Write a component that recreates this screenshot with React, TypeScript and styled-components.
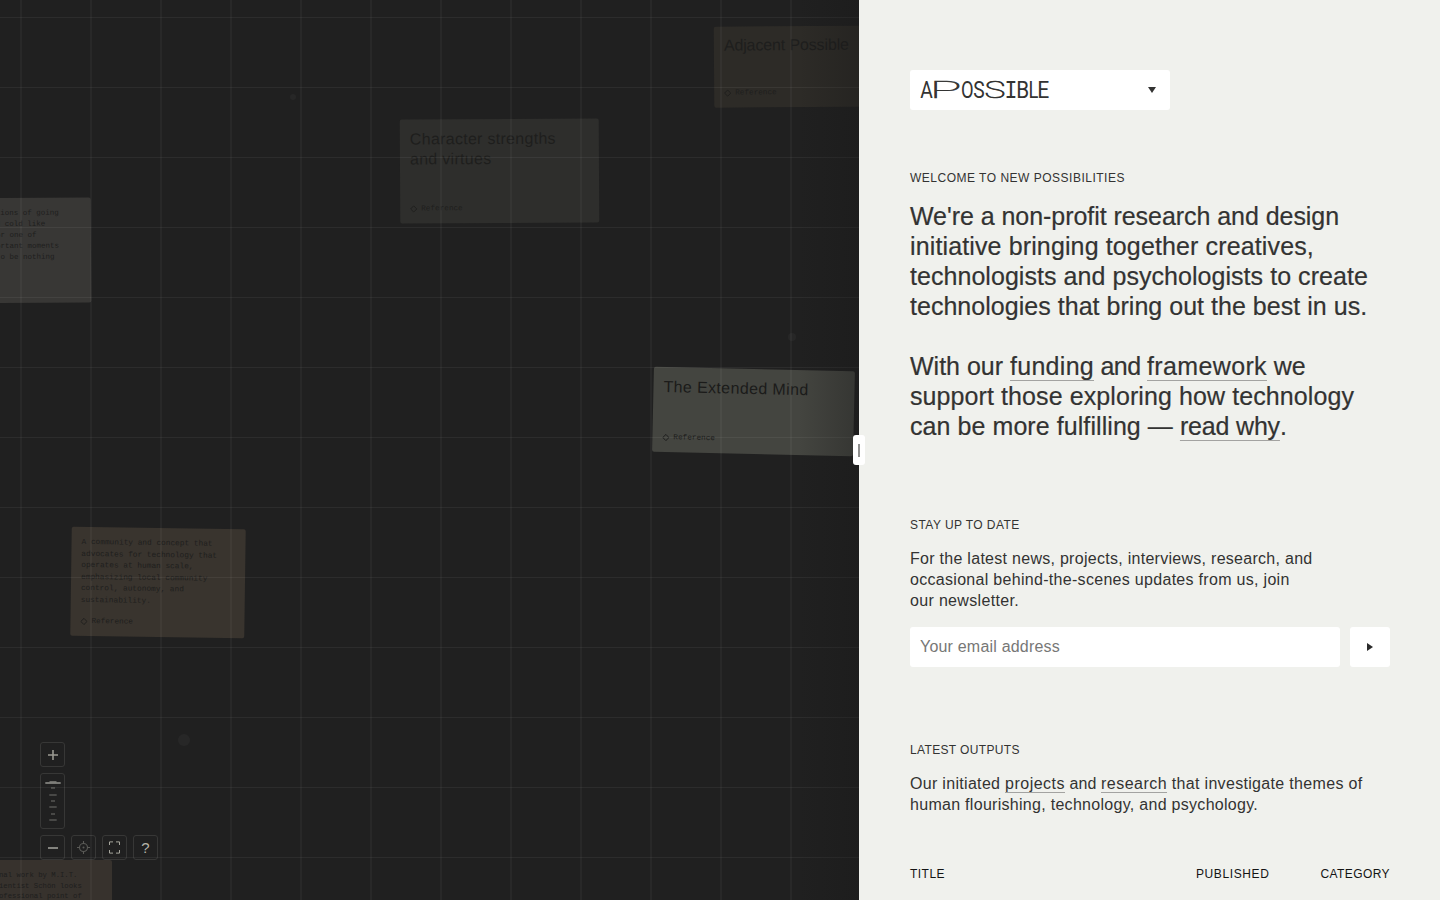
import React from 'react';
import styled, { createGlobalStyle } from 'styled-components';

const GlobalStyle = createGlobalStyle`
  * { box-sizing: border-box; }
  body { margin: 0; background: #f0f1ed; font-family: "Liberation Sans", Arial, sans-serif; }
`;

const Page = styled.div`
  display: flex;
  width: 100vw;
  height: 900px;
  overflow: hidden;
`;

/* ---------- canvas ---------- */

const Canvas = styled.main`
  position: relative;
  flex: 1;
  overflow: hidden;
  background: #202020;
`;

const Grid = styled.div`
  position: absolute;
  inset: 0;
  pointer-events: none;
  background-image:
    linear-gradient(90deg, rgba(255, 255, 255, 0.036) 2px, transparent 2px),
    linear-gradient(180deg, rgba(255, 255, 255, 0.056) 1px, transparent 1px);
  background-size: 70px 70px;
  background-position: 20px 17px;
`;

const EdgeShade = styled.div`
  position: absolute;
  inset: 0 0 0 auto;
  width: 60px;
  pointer-events: none;
  background: linear-gradient(90deg, rgba(24, 24, 24, 0), rgba(24, 24, 24, 0.35));
`;

const Card = styled.article<{ $x: number; $y: number; $w: number; $h: number; $bg: string; $tilt?: number; $ink?: string }>`
  position: absolute;
  left: ${(p) => p.$x}px;
  top: ${(p) => p.$y}px;
  width: ${(p) => p.$w}px;
  height: ${(p) => p.$h}px;
  padding: 10px;
  display: flex;
  flex-direction: column;
  justify-content: space-between;
  border-radius: 2px;
  background: ${(p) => p.$bg};
  color: ${(p) => p.$ink ?? '#1e1e1d'};
  transform: rotate(${(p) => p.$tilt ?? 0}deg);
`;

const CardTitle = styled.h3<{ $track: number; $leading?: number }>`
  margin: 0;
  font-size: 16px;
  font-weight: 400;
  line-height: ${(p) => p.$leading ?? 20}px;
  letter-spacing: ${(p) => p.$track}px;
  white-space: pre;
`;

const CardText = styled.p<{ $size: number; $leading: number }>`
  margin: 0;
  font-family: "Liberation Mono", monospace;
  font-size: ${(p) => p.$size}px;
  line-height: ${(p) => p.$leading}px;
  white-space: pre;
`;

const Tag = styled.div`
  display: flex;
  align-items: center;
  gap: 4px;
  height: 9px;
  font-family: "Liberation Mono", monospace;
  font-size: 7.7px;
  line-height: 9px;
`;

const Reference = () => (
  <Tag>
    <svg width="7" height="7" viewBox="0 0 7 7" fill="none" stroke="currentColor" strokeWidth="0.9">
      <path d="M3.5 0.4 6.6 3.5 3.5 6.6 0.4 3.5Z" />
    </svg>
    Reference
  </Tag>
);

const Speck = styled.i<{ $x: number; $y: number; $r: number }>`
  position: absolute;
  left: ${(p) => p.$x - p.$r}px;
  top: ${(p) => p.$y - p.$r}px;
  width: ${(p) => p.$r * 2}px;
  height: ${(p) => p.$r * 2}px;
  border-radius: 50%;
  background: #272727;
`;

const Controls = styled.div`
  position: absolute;
  left: 40px;
  bottom: 40px;
  display: flex;
  flex-direction: column;
  gap: 6px;
`;

const ControlRow = styled.div`
  display: flex;
  gap: 6px;
`;

const Control = styled.button<{ $tall?: boolean; $dim?: boolean }>`
  width: 25px;
  height: ${(p) => (p.$tall ? 56 : 25)}px;
  padding: 0;
  display: flex;
  align-items: center;
  justify-content: center;
  border: 1px solid #373736;
  border-radius: 3px;
  background: #202020;
  color: ${(p) => (p.$dim ? '#5b5b57' : '#b4b3a9')};
  font: 15px/24px "Liberation Sans", Arial, sans-serif;
`;

/* ---------- side panel ---------- */

const Panel = styled.aside`
  position: relative;
  width: 581px;
  flex: none;
  padding: 70px 50px 0 51px;
  display: flex;
  flex-direction: column;
  background: #f0f1ed;
  color: #333332;
`;

const Handle = styled.div`
  position: absolute;
  left: -6px;
  top: 435px;
  width: 12px;
  height: 30px;
  display: flex;
  align-items: center;
  justify-content: center;
  border-radius: 3px;
  background: #fff;

  &::after {
    content: "";
    width: 2px;
    height: 13px;
    background: #8f8f8e;
  }
`;

const SiteSelect = styled.button`
  width: 260px;
  height: 40px;
  padding: 0 14px 0 10px;
  display: flex;
  align-items: center;
  justify-content: space-between;
  border: 0;
  border-radius: 3px;
  background: #fff;
  color: #333332;
`;

const Section = styled.section<{ $top: number }>`
  margin-top: ${(p) => p.$top}px;
`;

const Eyebrow = styled.h2`
  margin: 0;
  font-size: 12px;
  font-weight: 400;
  line-height: 20px;
`;

const Lead = styled.p`
  margin: 13px 0 30px;
  font-size: 25px;
  line-height: 30px;
  -webkit-text-stroke: 0.2px currentColor;
`;

const Body = styled.p`
  margin: 13px 0 0;
  font-size: 16px;
  line-height: 21px;
`;

const Line = styled.span`
  display: block;
  white-space: pre;
`;

const Run = styled.span<{ $t: number }>`
  letter-spacing: ${(p) => p.$t}px;
`;

const Link = styled.a<{ $t: number; $drop: number }>`
  letter-spacing: ${(p) => p.$t}px;
  text-decoration: underline;
  text-decoration-color: #a3a3a1;
  text-decoration-thickness: 1px;
  text-decoration-skip-ink: none;
  text-underline-offset: ${(p) => p.$drop}px;
`;

const Form = styled.form`
  margin-top: 16px;
  display: flex;
  gap: 10px;
`;

const EmailInput = styled.input`
  flex: 1;
  height: 40px;
  padding: 0 10px;
  border: 0;
  border-radius: 3px;
  background: #fff;
  font: 16px "Liberation Sans", Arial, sans-serif;
  letter-spacing: 0.2px;

  &::placeholder { color: #777776; }
`;

const Submit = styled.button`
  width: 40px;
  height: 40px;
  padding: 0;
  display: flex;
  align-items: center;
  justify-content: center;
  border: 0;
  border-radius: 3px;
  background: #fff;
  color: #2a2a2a;
`;

const TableHead = styled.div`
  margin-top: 49px;
  display: grid;
  grid-template-columns: 286px 1fr auto;
  font-size: 12px;
  line-height: 20px;
  color: #141414;
`;

const LogoGlyph = styled.text<{ $wide?: boolean; $mono?: boolean }>`
  font-family: ${(p) => (p.$mono ? '"Liberation Mono", monospace' : 'Roboto, sans-serif')};
  font-size: ${(p) => (p.$mono ? 25 : 23.5)}px;
  font-weight: ${(p) => (p.$wide ? 100 : 400)};
  stroke: ${(p) => (p.$wide ? 'currentColor' : 'none')};
  stroke-width: 0.9px;
  vector-effect: non-scaling-stroke;
`;

const LETTERS: { ch: string; x: number; sx: number; wide?: boolean; mono?: boolean }[] = [
  { ch: 'A', x: 0.3, sx: 0.82 },
  { ch: 'P', x: 9.8, sx: 2.25, wide: true },
  { ch: 'O', x: 40.9, sx: 0.78 },
  { ch: 'S', x: 53.2, sx: 0.82 },
  { ch: 'S', x: 64.4, sx: 1.5, wide: true },
  { ch: 'I', x: 84.5, sx: 0.86, mono: true },
  { ch: 'B', x: 96.2, sx: 0.88 },
  { ch: 'L', x: 108.4, sx: 0.78 },
  { ch: 'E', x: 117.2, sx: 0.9 },
];

const Logo = () => (
  <svg width="132" height="24" viewBox="0 0 132 24" fill="currentColor" role="img">
    {LETTERS.map((l, i) => (
      <LogoGlyph key={i} $wide={l.wide} $mono={l.mono} transform={`translate(${l.x} 20.2) scale(${l.sx} 1)`}>
        {l.ch}
      </LogoGlyph>
    ))}
  </svg>
);

export default function App() {
  return (
    <>
      <GlobalStyle />
      <Page>
        <Canvas>
          <Speck $x={184} $y={740} $r={6} />
          <Speck $x={292.5} $y={97} $r={3} />
          <Speck $x={792} $y={337} $r={4} />

          <Card $x={-59} $y={197.5} $w={150} $h={104.5} $bg="#383735" $tilt={-0.4}>
            <CardText $size={7.5} $leading={11}>
              {'When sensations of going\nto warm and cold like\nyour day, or one of\nof the important moments\nthat seem to be nothing'}
            </CardText>
          </Card>
          <Card $x={399.7} $y={119} $w={199} $h={103.5} $bg="#2e2e2c" $tilt={-0.3}>
            <CardTitle $track={0.29}>{'Character strengths\nand virtues'}</CardTitle>
            <Reference />
          </Card>
          <Card $x={713.6} $y={26} $w={200} $h={80.5} $bg="#2d2b27" $tilt={-0.4}>
            <CardTitle $track={-0.13} $leading={17}>Adjacent Possible</CardTitle>
            <Reference />
          </Card>
          <Card $x={652.7} $y={369} $w={200.5} $h={84.5} $bg="#444540" $tilt={1.3} $ink="#1b1b1a">
            <CardTitle $track={0.37} $leading={20}>The Extended Mind</CardTitle>
            <Reference />
          </Card>
          <Card $x={71} $y={527.5} $w={174} $h={108.5} $bg="#39342e" $tilt={0.8}>
            <CardText $size={7.8} $leading={11.5}>
              {'A community and concept that\nadvocates for technology that\noperates at human scale,\nemphasizing local community\ncontrol, autonomy, and\nsustainability.'}
            </CardText>
            <Reference />
          </Card>

          <Controls>
            <Control aria-label="Zoom in">
              <svg width="23" height="23" viewBox="0 0 23 23" stroke="#9a9991" strokeWidth="1.6">
                <path d="M12 7v10M7 12h10" />
              </svg>
            </Control>
            <Control $tall aria-label="Zoom level">
              <svg width="23" height="54" viewBox="0 0 23 54" stroke="#555553" strokeWidth="1.6">
                <path d="M8.5 7.8h7" stroke="#8f8f89" strokeWidth="1" />
                <path d="M4.3 9h15.4" stroke="#8f8f89" />
                <path d="M10 14h4M8.3 21h7.4M10 27h4M8.3 33h7.4M10 40h4M8.3 46h7.4" />
              </svg>
            </Control>
            <ControlRow>
              <Control aria-label="Zoom out">
                <svg width="23" height="23" viewBox="0 0 23 23" stroke="#8f8f89" strokeWidth="1.8">
                  <path d="M7 12h10" />
                </svg>
              </Control>
              <Control $dim aria-label="Center">
                <svg width="13" height="13" viewBox="0 0 13 13" fill="none" stroke="currentColor" strokeWidth="1.1">
                  <circle cx="6.5" cy="6.5" r="4" />
                  <path d="M6.5 0v2.5M6.5 10.5V13M0 6.5h2.5M10.5 6.5H13" />
                  <circle cx="6.5" cy="6.5" r="1" fill="currentColor" stroke="none" />
                </svg>
              </Control>
              <Control aria-label="Fullscreen">
                <svg width="11" height="13" viewBox="0 0 11 13" fill="none" stroke="currentColor" strokeWidth="0.9">
                  <path d="M0.5 4V0.9H4M7 0.9h3.5V4M10.5 9v3.1H7M4 12.1H0.5V9" />
                </svg>
              </Control>
              <Control aria-label="Help">?</Control>
            </ControlRow>
          </Controls>

          <Card $x={-59} $y={860} $w={171} $h={104} $bg="#37322d">
            <CardText $size={7.28} $leading={10.5}>
              {'A foundational work by M.I.T.\nResearch scientist Schön looks\nfrom the professional point of'}
            </CardText>
          </Card>
          <Grid />
          <EdgeShade />
        </Canvas>

        <Panel>
          <Handle />
          <SiteSelect aria-label="Apossible">
            <Logo />
            <svg width="8" height="6" viewBox="0 0 8 6" fill="currentColor"><path d="M0 0h8L4 6Z" /></svg>
          </SiteSelect>

          <Section $top={58}>
            <Eyebrow><Run $t={0.5}>WELCOME TO NEW POSSIBILITIES</Run></Eyebrow>
            <Lead>
              <Line><Run $t={-0.05}>We're a non-profit research and design</Run></Line>
              <Line><Run $t={0.13}>initiative bringing together creatives,</Run></Line>
              <Line><Run $t={0.05}>technologists and psychologists to create</Run></Line>
              <Line><Run $t={0.03}>technologies that bring out the best in us.</Run></Line>
            </Lead>
            <Lead>
              <Line>
                <Run $t={0}>With our </Run><Link $t={0.28} $drop={5}>funding</Link>
                <Run $t={-0.52}> and </Run><Link $t={0.36} $drop={5}>framework</Link><Run $t={-0.1}> we</Run>
              </Line>
              <Line><Run $t={0.09}>support those exploring how technology</Run></Line>
              <Line><Run $t={0.07}>can be more fulfilling — </Run><Link $t={-0.18} $drop={5}>read why</Link>.</Line>
            </Lead>
          </Section>

          <Section $top={44}>
            <Eyebrow><Run $t={0.44}>STAY UP TO DATE</Run></Eyebrow>
            <Body>
              <Line><Run $t={0.28}>For the latest news, projects, interviews, research, and</Run></Line>
              <Line><Run $t={0.3}>occasional behind-the-scenes updates from us, join</Run></Line>
              <Line><Run $t={0.33}>our newsletter.</Run></Line>
            </Body>
            <Form>
              <EmailInput type="email" placeholder="Your email address" />
              <Submit type="button" aria-label="Subscribe">
                <svg width="6" height="8" viewBox="0 0 6 8" fill="currentColor"><path d="M0 0v8L6 4Z" /></svg>
              </Submit>
            </Form>
          </Section>

          <Section $top={73}>
            <Eyebrow><Run $t={0.35}>LATEST OUTPUTS</Run></Eyebrow>
            <Body>
              <Line>
                <Run $t={0.31}>Our initiated </Run><Link $t={0.49} $drop={3}>projects</Link>
                <Run $t={0.08}> and </Run><Link $t={0.47} $drop={3}>research</Link>
                <Run $t={0.32}> that investigate themes of</Run>
              </Line>
              <Line><Run $t={0.29}>human flourishing, technology, and psychology.</Run></Line>
            </Body>
            <TableHead>
              <Run $t={0.47}>TITLE</Run>
              <Run $t={0.6}>PUBLISHED</Run>
              <Run $t={0.42}>CATEGORY</Run>
            </TableHead>
          </Section>
        </Panel>
      </Page>
    </>
  );
}
